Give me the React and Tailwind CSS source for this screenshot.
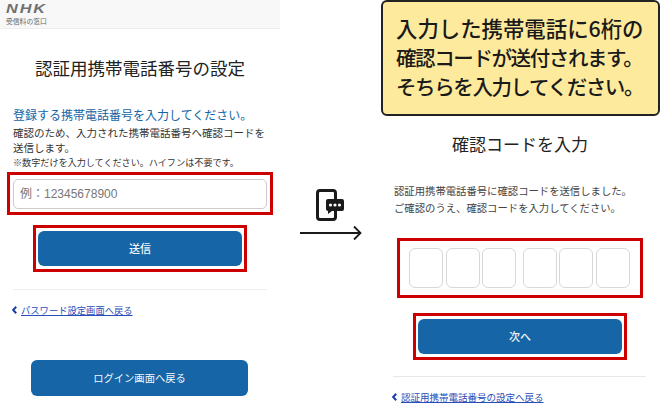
import React from "react";

const font = { fontFamily: '"Noto Sans CJK JP", "Liberation Sans", sans-serif' };

const BackLink = ({ children, className = "text-[9.3px]" }) => (
  <div className={`flex items-center gap-[4px] leading-[14px] text-[#2a4cb8] ${className}`}>
    <svg width="5" height="8" viewBox="0 0 5 8" fill="none" stroke="#1a3fa8" strokeWidth="2">
      <path d="M4.2 .8 1.2 4l3 3.2" />
    </svg>
    <a className="underline">{children}</a>
  </div>
);

const BlueButton = ({ children, className }) => (
  <div className={`flex items-center justify-center rounded-[6px] bg-[#1565a7] text-[#f2f6fa] ${className}`}>
    {children}
  </div>
);

const LeftPanel = () => (
  <div className="w-[280px] shrink-0">
    {/* header */}
    <div className="h-[29px] bg-[#f8f8f8] border-b border-[#eeeeee] pl-[6px]">
      <div
        className="origin-left scale-x-[1.3] text-[12.5px] leading-[11px] pt-[4px] font-bold italic tracking-[1.5px] text-[#707070]"
        style={{ fontFamily: '"Liberation Sans", sans-serif' }}
      >
        NHK
      </div>
      <div className="text-[6.8px] leading-[9px] mt-[2px] text-[#666666]">受信料の窓口</div>
    </div>

    <h1 className="mt-[27px] text-center text-[17.5px] leading-[24px] text-[#222222]">
      認証用携帯電話番号の設定
    </h1>

    <div className="mt-[26px] pl-[13px] pr-[14px]">
      <p className="text-[12px] leading-[18px] text-[#1565a7]">登録する携帯電話番号を入力してください。</p>
      <p className="mt-[1px] text-[10.5px] leading-[15px] text-[#333333]">
        確認のため、入力された携帯電話番号へ確認コードを送信します。
      </p>
      <p className="mt-[1px] text-[9.1px] leading-[13px] text-[#333333]">※数字だけを入力してください。ハイフンは不要です。</p>
    </div>

    <div className="mt-[3px] mx-[7px] border-[3px] border-[#cc0000] px-[3px] pt-[4px] pb-[3px]">
      <div
        className="flex h-[30px] items-center rounded-[5px] border border-[#cccccc] px-[6px] text-[12px] text-[#777777]"
        style={{ fontFamily: '"Liberation Sans", "Noto Sans CJK JP", sans-serif' }}
      >
        例：12345678900
      </div>
    </div>

    <div className="mt-[10px] mx-[33px] border-[3px] border-[#cc0000] px-[2px] py-[3px]">
      <BlueButton className="h-[35px] text-[11px] font-medium">送信</BlueButton>
    </div>

    <div className="mt-[17px] mx-[13px] h-px bg-[#eeeeee]" />

    <div className="mt-[13px] pl-[12px]">
      <BackLink>パスワード設定画面へ戻る</BackLink>
    </div>

    <BlueButton className="mt-[43px] ml-[31px] mr-[32px] h-[36px] text-[10.3px]">ログイン画面へ戻る</BlueButton>
  </div>
);

const MiddleArrow = () => (
  <div className="w-[100px] shrink-0 pt-[189px] pl-[20px]">
    <svg width="64" height="52" viewBox="0 0 64 52" fill="none">
      {/* phone */}
      <rect x="17.5" y="1.5" width="18" height="29" rx="2.5" stroke="#1a1a1a" strokeWidth="3" />
      {/* speech bubble */}
      <path d="M28 10h14a2 2 0 0 1 2 2v8a2 2 0 0 1-2 2H32l-4 3v-3a2 2 0 0 1-2-2v-8a2 2 0 0 1 2-2z" fill="#1a1a1a" />
      <circle cx="30.5" cy="16" r="1.6" fill="#fff" />
      <circle cx="35" cy="16" r="1.6" fill="#fff" />
      <circle cx="39.5" cy="16" r="1.6" fill="#fff" />
      {/* arrow */}
      <path d="M0 44h60" stroke="#1a1a1a" strokeWidth="1.8" />
      <path d="M54 37.5 60.5 44 54 50.5" stroke="#1a1a1a" strokeWidth="1.8" />
    </svg>
  </div>
);

const CodeBox = ({ className = "" }) => (
  <div className={`h-[40px] w-[34px] rounded-[6px] border border-[#d8d8d8] ${className}`} />
);

const RightPanel = () => (
  <div className="w-[280px] shrink-0">
    <div className="ml-[1px] h-[116px] rounded-[6px] border-2 border-[#222222] bg-[#feea9c] pl-[13px] pt-[11px] leading-[29.5px] font-medium text-[#1a1a1a] whitespace-nowrap">
      <div className="text-[21.4px]">入力した携帯電話に6桁の</div>
      <div className="text-[20.5px] tracking-[-1.4px]">確認コードが送付されます。</div>
      <div className="text-[20.5px] tracking-[-1.4px]">そちらを入力してください。</div>
    </div>

    <h2 className="mt-[16px] text-center text-[17px] leading-[24px] text-[#222222]">確認コードを入力</h2>

    <div className="mt-[26px] pl-[14px] text-[10.35px] leading-[17px] text-[#444444] whitespace-nowrap">
      <div>認証用携帯電話番号に確認コードを送信しました。</div>
      <div>ご確認のうえ、確認コードを入力してください。</div>
    </div>

    <div className="mt-[22px] ml-[17px] w-[246px] h-[60px] border-[3px] border-[#cc0000] flex items-center pl-[9px] gap-[2.5px]">
      <CodeBox />
      <CodeBox />
      <CodeBox />
      <CodeBox className="ml-[4px]" />
      <CodeBox />
      <CodeBox />
    </div>

    <div className="mt-[15px] mx-[33px] border-[3px] border-[#cc0000] px-[2px] py-[3px]">
      <BlueButton className="h-[35px] text-[11px] font-medium">次へ</BlueButton>
    </div>

    <div className="mt-[16px] ml-[13px] mr-[14px] h-px bg-[#e8e8e8]" />

    <div className="mt-[13px] pl-[12px]">
      <BackLink className="text-[9.5px]">認証用携帯電話番号の設定へ戻る</BackLink>
    </div>
  </div>
);

export default function App() {
  return (
    <div className="flex h-[418px] w-[660px] overflow-hidden bg-white" style={font}>
      <LeftPanel />
      <MiddleArrow />
      <RightPanel />
    </div>
  );
}
